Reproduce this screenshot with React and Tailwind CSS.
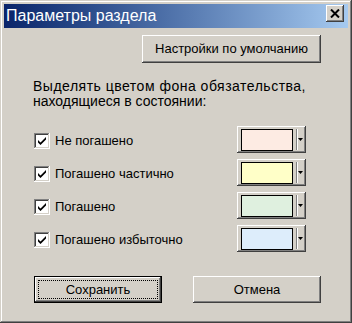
import React from "react";

const raised =
  "shadow-[inset_-1px_-1px_#404040,inset_1px_1px_#ffffff,inset_-2px_-2px_#808080,inset_2px_2px_#d4d0c8]";

function Check({ label }) {
  return (
    <div className="flex items-center">
      <div className="w-[16px] h-[16px] bg-white flex items-center justify-center shadow-[inset_-1px_-1px_#ffffff,inset_1px_1px_#808080,inset_-2px_-2px_#d4d0c8,inset_2px_2px_#404040]">
        <svg width="16" height="16" viewBox="0 0 16 16">
          <path d="M4 7 L4 9.5 L6.5 12 L12 6.5 L12 4 L6.5 9.5 Z" fill="#000" />
        </svg>
      </div>
      <span className="ml-[5px] text-[13px] leading-[16px] text-black">{label}</span>
    </div>
  );
}

function Picker({ color }) {
  return (
    <div className={`relative w-[69px] h-[27px] bg-[#d4d0c8] ${raised}`}>
      <div
        className="absolute left-[4px] top-[3px] w-[52px] h-[22px] border border-black"
        style={{ background: color }}
      />
      <div className="absolute left-[59px] top-[3px] w-[1px] h-[21px] bg-[#808080]" />
      <div className="absolute left-[60px] top-[3px] w-[1px] h-[21px] bg-white" />
      <svg className="absolute left-[61px] top-[12px]" width="6" height="4" viewBox="0 0 6 4">
        <path d="M0 0 H5 L2.5 3 Z" fill="#000" />
      </svg>
    </div>
  );
}

function Row({ label, color }) {
  return (
    <div className="flex items-center justify-between h-[27px] mb-[6px]">
      <div className="mt-[3px]">
        <Check label={label} />
      </div>
      <div className="mr-[15px]">
        <Picker color={color} />
      </div>
    </div>
  );
}

export default function App() {
  return (
    <div
      className="w-[352px] h-[323px] bg-[#d4d0c8] p-[4px] flex flex-col shadow-[inset_-1px_-1px_#404040,inset_1px_1px_#d4d0c8,inset_-2px_-2px_#808080,inset_2px_2px_#ffffff]"
      style={{ fontFamily: '"Liberation Sans", Arial, sans-serif' }}
    >
      <div className="h-[24px] bg-gradient-to-r from-[#0a246a] to-[#a6caf0] flex items-center justify-between pl-[2px] pr-[4px]">
        <span className="text-white text-[16px] leading-[20px]">Параметры раздела</span>
        <div
          className={`w-[18px] h-[17px] bg-[#d4d0c8] flex items-center justify-center self-start mt-[1px] ${raised}`}
        >
          <svg width="10" height="9" viewBox="0 0 10 9">
            <path d="M1 0.5 L9 8.5 M9 0.5 L1 8.5" stroke="#000" strokeWidth="2" />
          </svg>
        </div>
      </div>

      <div className="flex-1 flex flex-col pl-[30px] pr-[27px]">
        <div
          className={`self-end mt-[7px] w-[179px] h-[28px] bg-[#d4d0c8] flex items-center justify-center text-[13px] text-black ${raised}`}
        >
          Настройки по умолчанию
        </div>

        <div className="mt-[16px] -ml-[1px] text-[14px] leading-[15px] text-black">
          <div className="tracking-[0.5px]">Выделять цветом фона обязательства,</div>
          <div>находящиеся в состоянии:</div>
        </div>

        <div className="mt-[17px] flex flex-col">
          <Row label="Не погашено" color="#fdebe3" />
          <Row label="Погашено частично" color="#ffffc8" />
          <Row label="Погашено" color="#dff0df" />
          <Row label="Погашено избыточно" color="#ddedfb" />
        </div>

        <div className="mt-[18px] flex justify-between">
          <div className="w-[128px] h-[27px] border border-black bg-[#d4d0c8]">
            <div className={`w-full h-full p-[3px] ${raised}`}>
              <div className="w-full h-full border border-dotted border-black flex items-center justify-center text-[13px] text-black">
                Сохранить
              </div>
            </div>
          </div>
          <div
            className={`w-[128px] h-[27px] bg-[#d4d0c8] flex items-center justify-center text-[13px] text-black ${raised}`}
          >
            Отмена
          </div>
        </div>
      </div>
    </div>
  );
}
